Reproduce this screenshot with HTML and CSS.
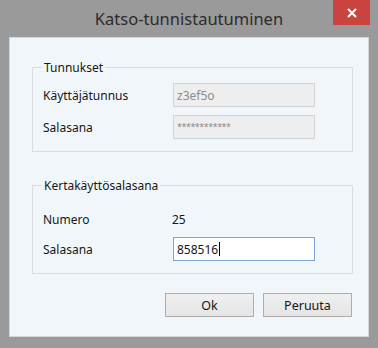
FILE: index.html
```html
<!DOCTYPE html>
<html lang="fi">
<head>
    <meta charset="UTF-8">
    <meta name="viewport" content="width=device-width, initial-scale=1.0">
    <title>Katso-tunnistautuminen</title>
    <link rel="stylesheet" href="styles.css">
</head>
<body>
    <div class="ikkuna">
        <div class="otsikko">
            <span class="otsikko-teksti">Katso-tunnistautuminen</span>
            <button class="sulje" aria-label="Sulje">
                <svg width="10" height="10" viewBox="0 0 10 10">
                    <path d="M1 1 L9 9 M9 1 L1 9" stroke="#fff" stroke-width="2" fill="none"/>
                </svg>
            </button>
        </div>

        <div class="sisalto">
            <fieldset class="ryhma">
                <legend>Tunnukset</legend>
                <div class="rivi">
                    <label>Käyttäjätunnus</label>
                    <div class="kentta pois">z3ef5o</div>
                </div>
                <div class="rivi">
                    <label>Salasana</label>
                    <div class="kentta pois tahdet">************</div>
                </div>
            </fieldset>

            <fieldset class="ryhma toinen">
                <legend>Kertakäyttösalasana</legend>
                <div class="rivi">
                    <label>Numero</label>
                    <span class="arvo">25</span>
                </div>
                <div class="rivi">
                    <label>Salasana</label>
                    <div class="kentta aktiivinen">858516<span class="kursori"></span></div>
                </div>
            </fieldset>

            <div class="napit">
                <button class="nappi">Ok</button>
                <button class="nappi">Peruuta</button>
            </div>
        </div>
    </div>
</body>
</html>
```

FILE: styles.css
```css
* {
    box-sizing: border-box;
    font-family: "Noto Sans", "Open Sans", sans-serif;
}

body {
    margin: 0;
    background-color: #9a9a9a;
}

.ikkuna {
    width: 378px;
    height: 348px;
    padding: 0 9px 11px 9px;
    background-color: #9a9a9a;
}

.otsikko {
    position: relative;
    height: 37px;
    display: flex;
    justify-content: center;
    align-items: center;
}

.otsikko-teksti {
    font-size: 16.5px;
    color: #2b2b2b;
    margin-top: -1px;
}

.sulje {
    position: absolute;
    top: 0;
    right: -1px;
    width: 37px;
    height: 25px;
    border: none;
    padding: 0;
    background-color: #c9443f;
    display: flex;
    justify-content: center;
    align-items: center;
}

.sisalto {
    height: 300px;
    background-color: #f1f6fb;
    border: 1px solid #d6d6d6;
    padding: 22px 15px 0 22px;
}

.ryhma {
    margin: 0;
    padding: 0 10px 12px 10px;
    border: 1px solid #d9dde2;
}

.ryhma legend {
    font-size: 12px;
    color: #161616;
    padding: 0 2px;
    margin-left: -1px;
    line-height: 15px;
}

.toinen {
    margin-top: 26px;
    padding-bottom: 12px;
}

.rivi {
    display: flex;
    align-items: center;
    height: 24px;
    margin-top: 8px;
}

.toinen .rivi:first-of-type {
    margin-top: 14px;
}

.toinen .rivi {
    margin-top: 6px;
}

.rivi label {
    width: 130px;
    font-size: 12px;
    color: #161616;
}

.arvo {
    font-size: 12px;
    color: #161616;
    margin-left: -1px;
}

.kentta {
    width: 142px;
    height: 24px;
    border: 1px solid #d3d3d3;
    font-size: 12px;
    padding: 0 3px;
    display: flex;
    align-items: center;
    color: #161616;
}

.pois {
    background-color: #eeeeee;
    color: #8c8c8c;
}

.tahdet {
    font-size: 9px;
    align-items: flex-start;
    padding-top: 4px;
    letter-spacing: -0.5px;
}

.aktiivinen {
    background-color: #fff;
    border-color: #7ea7d6;
}

.kursori {
    display: inline-block;
    width: 1px;
    height: 14px;
    background-color: #000;
    margin-left: 1px;
}

.napit {
    display: flex;
    justify-content: flex-end;
    gap: 9px;
    margin-top: 19px;
    padding-right: 1px;
}

.nappi {
    width: 89px;
    height: 24px;
    font-size: 12.5px;
    color: #161616;
    border: 1px solid #adadad;
    background: linear-gradient(#f0f0f0, #e5e5e5);
    padding: 0;
}
```
